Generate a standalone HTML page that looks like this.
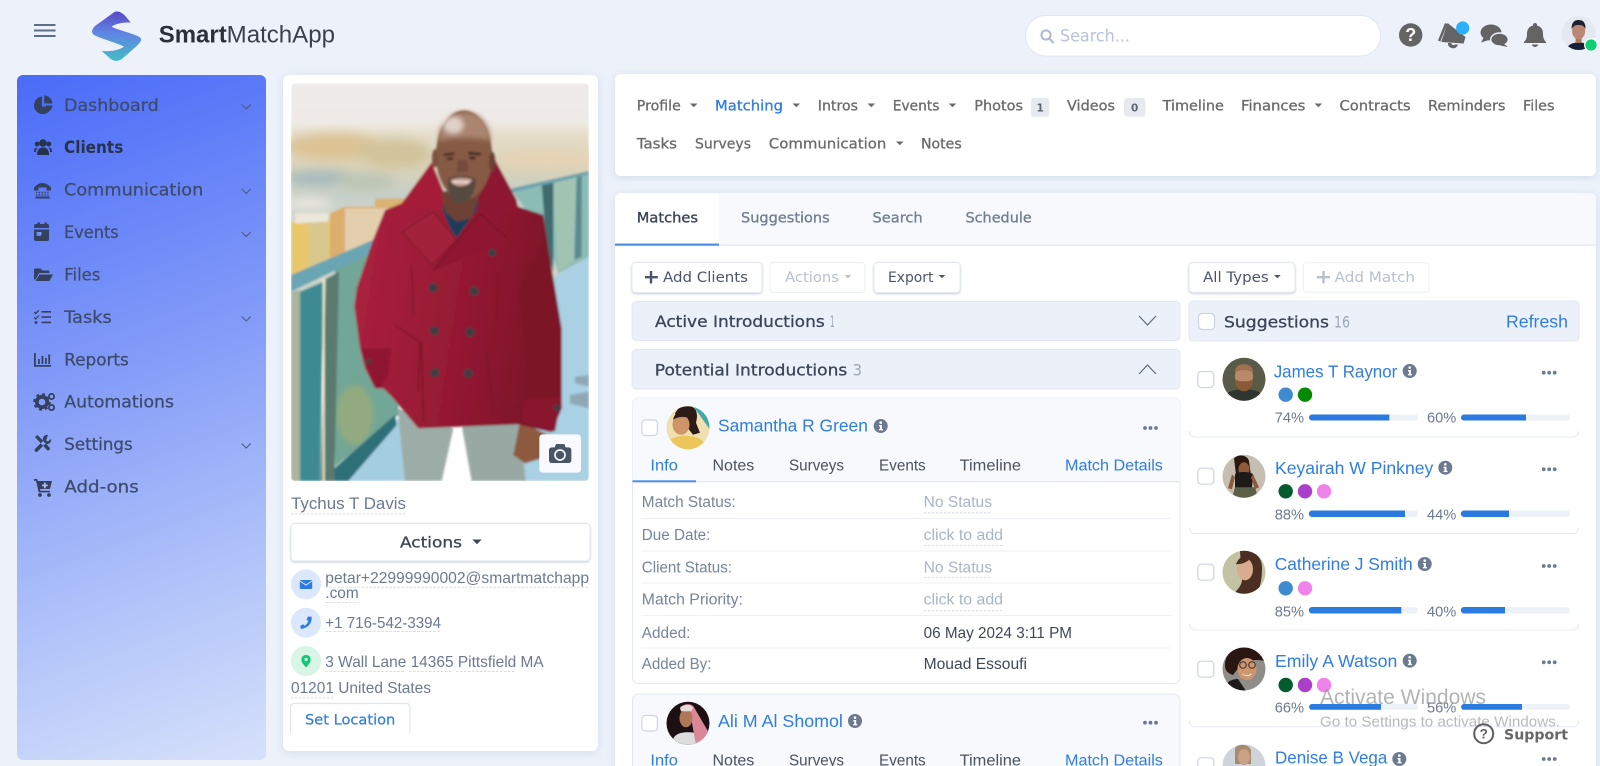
<!DOCTYPE html>
<html lang="en"><head><meta charset="utf-8"><title>SmartMatchApp</title>
<style>
html,body{margin:0;padding:0;background:#edf2fa;width:1600px;height:766px;overflow:hidden}
svg{display:block;filter:blur(.35px)}
text{white-space:pre}
.p{font-family:"DejaVu Sans",sans-serif}
.l{font-family:"Liberation Sans",sans-serif}
.nav{font-size:14px;fill:#6b6b6b;stroke:#6b6b6b;stroke-width:.3;font-family:"DejaVu Sans",sans-serif}
.side{font-size:16.5px;fill:#3c4a6c;stroke:#3c4a6c;stroke-width:.25;font-family:"DejaVu Sans",sans-serif}
.btn{font-size:14px;fill:#4a5568;stroke:currentColor;stroke-width:0;font-family:"DejaVu Sans",sans-serif}
.hd{font-size:16px;fill:#3a4558;font-family:"DejaVu Sans",sans-serif}
.nm{font-size:17.5px;fill:#2f7de1;font-family:"Liberation Sans",sans-serif}
.tb{font-size:15.5px;fill:#4a5361;font-family:"Liberation Sans",sans-serif}
.lb{font-size:15.5px;fill:#76859a;font-family:"Liberation Sans",sans-serif}
.vl{font-size:15.5px;fill:#a9b5c8;font-family:"Liberation Sans",sans-serif}
.dk{font-size:15.5px;fill:#3e4857;font-family:"Liberation Sans",sans-serif}
.ct{font-size:16px;fill:#6b7a90;font-family:"Liberation Sans",sans-serif}
.pc{font-size:15px;fill:#6b7a90;font-family:"Liberation Sans",sans-serif}
.dash{stroke:#d5dce9;stroke-width:1;stroke-dasharray:2.5 1.5}
.sep{stroke:#edf1f7;stroke-width:1}
</style></head><body>
<svg width="1600" height="766" viewBox="0 0 1600 766" xmlns="http://www.w3.org/2000/svg">
<defs>
<linearGradient id="sg" gradientUnits="userSpaceOnUse" x1="17" y1="75" x2="266" y2="760"><stop offset="0" stop-color="#4a6bf8"/><stop offset=".4" stop-color="#8099f8"/><stop offset=".75" stop-color="#b3c5f9"/><stop offset="1" stop-color="#d6e1fa"/></linearGradient>
<linearGradient id="lg" x1=".55" y1="0" x2=".5" y2="1"><stop offset="0" stop-color="#5a48c4"/><stop offset=".45" stop-color="#5f86e4"/><stop offset="1" stop-color="#45bcc6"/></linearGradient>
<linearGradient id="city" x1="0" y1="0" x2="0" y2="1"><stop offset="0" stop-color="#eeebea"/><stop offset=".14" stop-color="#efeae6"/><stop offset=".2" stop-color="#e4dcc8"/><stop offset=".32" stop-color="#d9d2b8"/><stop offset=".42" stop-color="#c6cfc8"/><stop offset=".52" stop-color="#d2d7cf"/><stop offset="1" stop-color="#c5d0c0"/></linearGradient>
<linearGradient id="coat" x1="0" y1="0" x2="1" y2=".2"><stop offset="0" stop-color="#ad2240"/><stop offset=".55" stop-color="#971a34"/><stop offset="1" stop-color="#7c1229"/></linearGradient>
<filter id="sh" x="-5%" y="-5%" width="110%" height="110%"><feDropShadow dx="0" dy="2" stdDeviation="5" flood-color="#9fb0cc" flood-opacity=".35"/></filter>
<filter id="bs" x="-20%" y="-20%" width="140%" height="160%"><feDropShadow dx="0" dy="1" stdDeviation="1" flood-color="#5a6a85" flood-opacity=".35"/></filter>
<filter id="bl"><feGaussianBlur stdDeviation="3"/></filter>
<filter id="bl2"><feGaussianBlur stdDeviation="14"/></filter>
<filter id="bl4"><feGaussianBlur stdDeviation="7"/></filter>
<clipPath id="ph"><rect x="18" y="25" width="894" height="1193" rx="12"/></clipPath>
<clipPath id="av"><circle r="21.5"/></clipPath>
<clipPath id="hav"><circle r="17"/></clipPath>
<symbol id="inf" viewBox="-7 -7 14 14" overflow="visible"><circle r="7" fill="#6b7a90"/><circle cy="-3.4" r="1.3" fill="#fff"/><path d="M-1.7-1h2.9v4h1v1.4h-4V3h1V.4h-.9z" fill="#fff"/></symbol>
<symbol id="dots" viewBox="0 0 15 4" overflow="visible"><circle cx="2" cy="2" r="1.9" fill="#6b7a90"/><circle cx="7.5" cy="2" r="1.9" fill="#6b7a90"/><circle cx="13" cy="2" r="1.9" fill="#6b7a90"/></symbol>
<symbol id="cb" viewBox="0 0 17 17" overflow="visible"><rect x=".5" y=".5" width="16" height="16" rx="3.5" fill="#fff" stroke="#ccd5e4" stroke-width="1.2"/></symbol>
</defs>

<rect width="1600" height="766" fill="#edf2fa"/>

<!-- header -->
<g fill="#5d6e87"><rect x="34" y="24" width="21.5" height="2"/><rect x="34" y="29.5" width="21.5" height="2"/><rect x="34" y="35" width="21.5" height="2"/></g>
<path transform="scale(.3333)" fill="url(#lg)" d="M345 35C360 32 372 40 392 68C370 66 345 72 335 80C345 88 400 100 420 112C428 120 420 128 410 138L368 175C355 186 340 184 330 175L305 153C330 155 355 152 372 140C350 128 300 115 282 105C272 98 276 88 285 78Z"/>
<text x="158.7" y="42.5" font-family="Liberation Sans" font-weight="700" font-size="24" fill="#2b2f3a" textLength="68" lengthAdjust="spacingAndGlyphs">Smart</text>
<text x="226.7" y="42.5" font-family="Liberation Sans" font-size="24" fill="#3b404c" textLength="108.3" lengthAdjust="spacingAndGlyphs">MatchApp</text>

<rect x="1025.6" y="15.5" width="355" height="40.5" rx="20" fill="#fff" stroke="#dfe7f3"/>
<circle cx="1046" cy="35" r="4.6" fill="none" stroke="#aebbd0" stroke-width="2"/><path d="M1049.5 38.5l4 4.5" stroke="#aebbd0" stroke-width="2.2"/>
<text x="1060" y="41.5" class="p" font-size="16.5" fill="#b7c3d7" textLength="70" lengthAdjust="spacingAndGlyphs">Search...</text>

<circle cx="1410.7" cy="35" r="11.7" fill="#646464"/>
<text x="1410.7" y="41.2" text-anchor="middle" font-family="Liberation Sans" font-weight="700" font-size="18" fill="#fff">?</text>
<g fill="#646464"><path d="M1438 40.500l7-17.500 2.300 1-7 17.500z"/><path d="M1447.500 23l18 14-1.800 6.500-22.500-1.500z"/><path d="M1448 43a5 4.500 0 0 0 10 1.500h-3a2.300 2.300 0 0 1-3.800-1.500z"/></g>
<circle cx="1462.7" cy="28" r="6.6" fill="#2bb0ff"/>
<g fill="#646464"><ellipse cx="1491" cy="32.500" rx="10.500" ry="8"/><path d="M1484 37l-3 5.500 8-2.500z"/><ellipse cx="1499.500" cy="39.500" rx="8.800" ry="6.500" stroke="#edf2fa" stroke-width="1.400"/><path d="M1504 44l4 3-8-1.500z"/></g>
<path fill="#646464" d="M1535 23a2 2 0 0 1 2 2.5c4 1 6 4 6 8 0 4.500 1 6.500 3 8.500v1h-22v-1c2-2 3-4 3-8.500 0-4 2-7 6-8a2 2 0 0 1 2-2.500z"/><path fill="#646464" d="M1532 44.500h6a3 2.500 0 0 1-6 0z"/>
<g transform="translate(1578.6,33)" clip-path="url(#hav)"><rect x="-17" y="-17" width="34" height="34" fill="#e4e8ef"/><path d="M-12 17c1-6 6-7 12-8 6 1 11 2 12 8z" fill="#15203c"/><rect x="-3" y="3" width="6" height="7" fill="#a87560"/><ellipse cy="-2" rx="6.5" ry="8.500" fill="#b98773"/><path d="M-7-4c0-7 3-9 7-9s7 2 7 9c-2-3-3-4-7-4s-5 1-7 4z" fill="#1f2230"/></g>
<circle cx="1591" cy="45" r="6.300" fill="#0fd070" stroke="#fff" stroke-width="1.300"/>

<!-- sidebar -->
<rect x="17" y="75" width="249" height="685" rx="6" fill="url(#sg)"/>
<g fill="#33415f">
<path d="M42 96.500A8.800 8.800 0 1 0 51.500 106.500L42 106.500Z"/><path d="M44.200 95.500A8.200 8.200 0 0 1 52.300 103.500H44.200Z"/><path d="M45 105.500h7.300a8 8 0 0 1-2 5z"/>
<circle cx="43" cy="143" r="3.700" fill="#27324b"/><circle cx="37.200" cy="144" r="2.400" fill="#27324b"/><circle cx="48.800" cy="144" r="2.400" fill="#27324b"/><path d="M37 155c0-5 2-7.500 6-7.500s6 2.500 6 7.500z" fill="#27324b"/><path d="M34 152c0-3 1-4.500 3.800-4.500-1.500 1-2 3-2 4.500zM52 152c0-3-1-4.500-3.800-4.500 1.500 1 2 3 2 4.500z" fill="#27324b"/>
<path d="M34 187.500q8.500-9 17 0v3h-4.500v-3h-8v3H34z"/>
<g stroke="#33415f" stroke-width="1.500" stroke-dasharray="1.400 1.400"><path d="M36 192.500h13M36 195h13"/></g><rect x="35.500" y="196.500" width="14" height="2"/>
<path d="M34 226a2 2 0 0 1 2-2h1.500v-1.500h2.500V224h4.500v-1.500H47V224h.5a2 2 0 0 1 1.500 2v2H34z"/><path d="M34 229.500h15V239a2 2 0 0 1-2 2H36a2 2 0 0 1-2-2zM36.500 232v4h4.500v-4z" fill-rule="evenodd"/>
<path d="M34 270a1.500 1.500 0 0 1 1.500-1.500h5l2 2H48a1.500 1.500 0 0 1 1.500 1.500v1H39l-3.500 6.500H34z"/><path d="M39.500 274.500H53l-3.500 6.500H35.500z"/>
<path d="M41.500 311h9.500v1.600h-9.500zM41.500 316.300h9.500v1.600h-9.500zM41.500 321.600h9.500v1.600h-9.500z"/><path d="M34.500 311.500l1.300 1.300 2.500-3 .9.800-3.400 4-2-2zM34.500 316.800l1.300 1.300 2.500-3 .9.800-3.400 4-2-2z"/><circle cx="36" cy="322.500" r="1.500"/>
<path d="M34 353h1.800v12h15.300v1.800H34z"/><rect x="38" y="359" width="1.800" height="5"/><rect x="41.500" y="356" width="1.800" height="8"/><rect x="45" y="358" width="1.800" height="6"/><rect x="48.300" y="354.500" width="1.800" height="9.500"/>
<circle cx="42" cy="402" r="5.200" fill="none" stroke="#33415f" stroke-width="3.800"/><circle cx="42" cy="402" r="7.800" fill="none" stroke="#33415f" stroke-width="2" stroke-dasharray="3 3.100"/><circle cx="51.500" cy="396.500" r="2.600" fill="none" stroke="#33415f" stroke-width="1.800"/><circle cx="51.500" cy="407.500" r="2.600" fill="none" stroke="#33415f" stroke-width="1.800"/>
<path d="M35 437l2.500-2 12 12.500c1.500 1.500-1 4-2.500 2.500zM48 435a4.500 4.500 0 0 0-5 6L35 449c-1.500 1.500 1 4 2.500 2.500L45 444a4.500 4.500 0 0 0 6-5l-3 2.500-2-1z"/>
<path d="M34 479h3.200l.6 2H52l-2 8H40l.4 1.800h9.500v1.600H38.700L36 480.800H34z"/><circle cx="40" cy="495" r="1.900"/><circle cx="49" cy="495" r="1.900"/><path d="M44 482.500h1.700v2h2v1.700h-2v2H44v-2h-2v-1.700h2z" fill="#a9bbf8"/>
</g>
<rect x="38.500" y="232" width="3" height="3" fill="#7a96f8"/>
<text class="side" x="64" y="110.800" textLength="94.700" lengthAdjust="spacingAndGlyphs">Dashboard</text>
<text class="side" x="64" y="153" font-weight="700" style="fill:#27324b;stroke:none" textLength="59.300" lengthAdjust="spacingAndGlyphs">Clients</text>
<text class="side" x="64" y="195.500" textLength="139.300" lengthAdjust="spacingAndGlyphs">Communication</text>
<text class="side" x="64" y="238" textLength="54.700" lengthAdjust="spacingAndGlyphs">Events</text>
<text class="side" x="64.300" y="280.700" textLength="36" lengthAdjust="spacingAndGlyphs">Files</text>
<text class="side" x="64.300" y="323" textLength="47.400" lengthAdjust="spacingAndGlyphs">Tasks</text>
<text class="side" x="64.300" y="365.300" textLength="64.400" lengthAdjust="spacingAndGlyphs">Reports</text>
<text class="side" x="64.300" y="407.700" textLength="109.700" lengthAdjust="spacingAndGlyphs">Automations</text>
<text class="side" x="64.300" y="450" textLength="68.400" lengthAdjust="spacingAndGlyphs">Settings</text>
<text class="side" x="64.300" y="492.700" textLength="74.400" lengthAdjust="spacingAndGlyphs">Add-ons</text>
<g fill="none" stroke="#4a5a80" stroke-width="1.100"><path d="M241.700 104.500l4.500 4.500 4.500-4.500M241.700 189l4.500 4.500 4.500-4.500M241.700 232l4.500 4.500 4.500-4.500M241.700 316.500l4.500 4.500 4.500-4.500M241.700 443.500l4.500 4.500 4.500-4.500"/></g>

<!-- profile card -->
<rect x="283" y="75" width="315" height="676" rx="6" fill="#fff" filter="url(#sh)"/>
<g transform="translate(285,75) scale(.33333)"><g clip-path="url(#ph)"><g filter="url(#bl)">
<rect x="18" y="25" width="894" height="800" fill="url(#city)"/>
<g filter="url(#bl2)"><ellipse cx="150" cy="215" rx="150" ry="40" fill="#dcc394"/><ellipse cx="330" cy="235" rx="110" ry="45" fill="#d2c49c"/><ellipse cx="790" cy="250" rx="150" ry="25" fill="#e7d3b5"/><ellipse cx="110" cy="310" rx="110" ry="25" fill="#a9bcbe"/><ellipse cx="240" cy="320" rx="90" ry="25" fill="#bcc5b5"/><ellipse cx="70" cy="385" rx="70" ry="22" fill="#e6e4dc"/></g>
<path d="M18 440L135 432V590L18 610z" fill="#e8c66a"/><path d="M70 440h60v150h-60z" fill="#d9c88e"/><path d="M30 415L130 415L130 440L30 445z" fill="#ebe7da"/><path d="M135 415L180 395H300V490L135 555z" fill="#dcae6e"/><path d="M180 400H300V490L180 530z" fill="#e3cfad"/><path d="M270 370H360V400H270z" fill="#d9b474"/>
<path d="M680 345L912 290V545L820 595L790 500z" fill="#8cbcb6"/><path d="M800 320L880 302V550L820 590z" fill="#a0c3b2"/><path d="M770 325L805 318V590L785 520z" fill="#3f6a70"/><path d="M875 300L890 296V545L868 555z" fill="#5a8a8f"/><path d="M680 340L912 288V298L680 352z" fill="#6ba2ac"/>
<path d="M800 610L912 545V1218H700z" fill="#a9d0e3"/><path d="M150 1218L340 1030L400 1218z" fill="#a5cde0"/>
<path d="M150 570L360 500L340 1020L150 1175z" fill="#72a696"/><ellipse cx="210" cy="1020" rx="55" ry="90" fill="#93aa80" filter="url(#bl4)"/><path d="M18 600L280 488L290 520L18 650z" fill="#6ba5b3"/>
<path d="M45 650L115 620L105 1218H45z" fill="#3d8a93"/><path d="M122 612L162 590L148 1218H106z" fill="#5a7a6e"/><rect x="113" y="610" width="6" height="608" fill="#eee9cf"/><path d="M18 650L45 645V1218H18z" fill="#a9b5a0"/><path d="M148 1180L330 1020L335 1050L190 1218H148z" fill="#2f6f78"/>
<path d="M870 905L912 900V935L870 925zM855 960L912 950V1000L855 985z" fill="#8fa8b6"/>
<path d="M338 1000L505 1060L470 1218H360z" fill="#9caca6"/><path d="M530 1050L702 1030L722 1218H560z" fill="#98a9a3"/>
<path d="M685 1140L705 1040L790 1080L770 1150L720 1165z" fill="#8d5a40"/>
<path d="M440 262L350 385L300 405L262 500L215 640L208 695L225 820L240 880L270 940L295 940L320 965L400 1060L700 1048L800 1072L830 1000L830 760L790 520L775 420L700 395L632 258L590 340L470 350z" fill="url(#coat)"/>
<path d="M700 640L780 480L825 780L830 1000L800 1070L715 1040L722 860z" fill="#7c1228"/>
<path d="M455 365L595 380L510 495z" fill="#1d3d5a"/>
<path d="M440 262L350 385L345 410L415 395L470 410L480 360z" fill="#a51e39"/><path d="M632 258L590 340L575 405L700 415L695 375z" fill="#8d1730"/><path d="M340 465L445 400L520 495L440 575z" fill="#a3203a"/><path d="M440 590L585 405L668 490L600 525z" fill="#8e1730"/><path d="M350 470L445 410L515 495L440 570z" fill="none" stroke="#85142c" stroke-width="4"/><path d="M445 585L585 415L665 490" fill="none" stroke="#78102a" stroke-width="4"/>
<path d="M410 800L415 1040M605 830L625 1020L715 990M330 750L405 800L400 950M380 570L385 720M640 590L635 740" fill="none" stroke="#7a1328" stroke-width="4"/>
<path d="M230 820L320 820L310 900L285 940L265 930z" fill="#8f1830"/><path d="M720 975L830 965L810 1070L710 1040z" fill="#8a152d"/>
<path d="M470 350L590 340L560 430L515 440L480 410z" fill="#6d4334"/>
<ellipse cx="537" cy="240" rx="85" ry="135" fill="#875a44"/><ellipse cx="450" cy="250" rx="10" ry="28" fill="#7d5240"/><ellipse cx="622" cy="260" rx="10" ry="30" fill="#6b4130"/>
<g filter="url(#bl4)"><path d="M462 200C460 140 490 112 540 112C590 112 618 150 616 200C590 185 490 185 462 200z" fill="#ab8570"/><ellipse cx="505" cy="150" rx="30" ry="25" fill="#e0d2c8"/></g>
<path d="M474 236L510 232L506 240L478 243zM548 230L590 234L586 241L552 239z" fill="#3d2a20"/><ellipse cx="495" cy="251" rx="11" ry="4" fill="#33231c"/><ellipse cx="562" cy="249" rx="11" ry="4" fill="#33231c"/>
<path d="M520 255L545 255L550 290L515 292z" fill="#74493a"/>
<path d="M488 315C500 298 550 298 572 312C572 350 555 388 522 386C500 384 488 350 488 315z" fill="#574840"/><path d="M496 316C512 306 545 306 562 314C552 340 505 340 496 316z" fill="#c79e90"/><path d="M503 318H552V324H503z" fill="#e8ddd8"/>
<g fill="#3c3e42"><circle cx="445" cy="638" r="14"/><circle cx="567" cy="648" r="14"/><circle cx="448" cy="767" r="14"/><circle cx="555" cy="772" r="14"/><circle cx="449" cy="893" r="14"/><circle cx="550" cy="895" r="14"/><circle cx="622" cy="533" r="12"/><circle cx="250" cy="860" r="8"/><circle cx="815" cy="998" r="10"/></g>
</g></g>
<rect x="763" y="1078" width="125" height="115" rx="10" fill="#f8faff"/>
<path d="M792 1125a8 8 0 0 1 8-8h9l4-10h25l4 10h9a8 8 0 0 1 8 8v31a8 8 0 0 1-8 8h-51a8 8 0 0 1-8-8z" fill="#4a5568"/><circle cx="825" cy="1140" r="15" fill="none" stroke="#f8faff" stroke-width="5"/>
</g>
<text x="291" y="508.800" class="ct" style="font-size:17px" textLength="115" lengthAdjust="spacingAndGlyphs">Tychus T Davis</text>
<path class="dash" d="M291 514h115"/>
<rect x="291" y="523.500" width="299" height="37.500" rx="4" fill="#fff" stroke="#e3e8f0" filter="url(#bs)"/>
<text x="400" y="547.500" class="p" font-size="15.500" fill="#3d4757" stroke="#3d4757" stroke-width=".3" textLength="62" lengthAdjust="spacingAndGlyphs">Actions</text>
<path d="M472.300 539.500h9.400l-4.700 4.700z" fill="#3d4757"/>
<circle cx="306" cy="584.300" r="15" fill="#dbe7fb"/><rect x="299.800" y="580" width="12.400" height="9" rx="1.300" fill="#2f7de1"/><path d="M300 581l6 4 6-4" fill="none" stroke="#dbe7fb" stroke-width="1"/>
<text x="325.300" y="582.800" class="ct" textLength="263.700" lengthAdjust="spacingAndGlyphs">petar+22999990002@smartmatchapp</text>
<path class="dash" d="M325.300 587.300H589"/>
<text x="325.300" y="598.200" class="ct" textLength="33.400" lengthAdjust="spacingAndGlyphs">.com</text>
<path class="dash" d="M325.300 602.500h33.400"/>
<circle cx="306" cy="622.700" r="15" fill="#dbe7fb"/><path d="M311.500 616.500c1 6-3 11.500-10.500 12.500l-.8-3 3-1.800 1.500 1.500c1.800-1.100 3-2.800 3.600-4.800l-1.800-1 1.300-3.100z" fill="#2f7de1"/>
<text x="325.300" y="627.800" class="ct" textLength="115.700" lengthAdjust="spacingAndGlyphs">+1 716-542-3394</text>
<path class="dash" d="M325.300 631.500H441"/>
<circle cx="306" cy="661" r="15" fill="#d8f5e6"/><path d="M306 667.500c-3-3.500-4.700-5.500-4.700-8a4.700 4.700 0 0 1 9.400 0c0 2.500-1.700 4.500-4.700 8z" fill="#10c978"/><circle cx="306" cy="659.500" r="1.600" fill="#d8f5e6"/>
<text x="325.300" y="666.800" class="ct" textLength="218.400" lengthAdjust="spacingAndGlyphs">3 Wall Lane 14365 Pittsfield MA</text>
<path class="dash" d="M325.300 671.500H405M409 671.500h43M456 671.500h60"/>
<text x="291" y="692.800" class="ct" textLength="140" lengthAdjust="spacingAndGlyphs">01201 United States</text>
<path class="dash" d="M291 698h43"/>
<path d="M290.500 733v-26a3.500 3.500 0 0 1 3.500-3.500h112.500a3.500 3.500 0 0 1 3.500 3.500v26" fill="#fff" stroke="#dfe5ef" stroke-width="1.200"/>
<text x="305" y="724.300" class="p" font-size="14" fill="#2f7de1" stroke="#2f7de1" stroke-width=".2" textLength="90.300" lengthAdjust="spacingAndGlyphs">Set Location</text>

<!-- top nav -->
<rect x="615" y="74" width="981" height="102" rx="6" fill="#fff" filter="url(#sh)"/>
<text class="nav" x="636.800" y="110.700" textLength="44" lengthAdjust="spacingAndGlyphs">Profile</text>
<text class="nav" x="715" y="110.700" style="fill:#2f7de1;stroke:#2f7de1" textLength="68" lengthAdjust="spacingAndGlyphs">Matching</text>
<text class="nav" x="817.800" y="110.700" textLength="40.200" lengthAdjust="spacingAndGlyphs">Intros</text>
<text class="nav" x="892.800" y="110.700" textLength="46.700" lengthAdjust="spacingAndGlyphs">Events</text>
<text class="nav" x="974.300" y="110.700" textLength="48.700" lengthAdjust="spacingAndGlyphs">Photos</text>
<rect x="1031" y="98" width="18.300" height="18.700" rx="3" fill="#e6e9ee"/><text x="1040.200" y="111.500" text-anchor="middle" class="p" font-size="10.500" font-weight="700" fill="#5f6670">1</text>
<text class="nav" x="1067" y="110.700" textLength="48" lengthAdjust="spacingAndGlyphs">Videos</text>
<rect x="1124" y="98" width="21.400" height="18.700" rx="3" fill="#e6e9ee"/><text x="1134.700" y="111.500" text-anchor="middle" class="p" font-size="10.500" font-weight="700" fill="#5f6670">0</text>
<text class="nav" x="1162.600" y="110.700" textLength="61.300" lengthAdjust="spacingAndGlyphs">Timeline</text>
<text class="nav" x="1241" y="110.700" textLength="64.400" lengthAdjust="spacingAndGlyphs">Finances</text>
<text class="nav" x="1339.500" y="110.700" textLength="71.100" lengthAdjust="spacingAndGlyphs">Contracts</text>
<text class="nav" x="1428" y="110.700" textLength="77.500" lengthAdjust="spacingAndGlyphs">Reminders</text>
<text class="nav" x="1523" y="110.700" textLength="31.500" lengthAdjust="spacingAndGlyphs">Files</text>
<text class="nav" x="636.800" y="148.700" textLength="40.200" lengthAdjust="spacingAndGlyphs">Tasks</text>
<text class="nav" x="695" y="148.700" textLength="56" lengthAdjust="spacingAndGlyphs">Surveys</text>
<text class="nav" x="768.800" y="148.700" textLength="117.500" lengthAdjust="spacingAndGlyphs">Communication</text>
<text class="nav" x="921" y="148.700" textLength="40.700" lengthAdjust="spacingAndGlyphs">Notes</text>
<g fill="#6b6b6b"><path d="M690 103.500h7.600l-3.800 3.800zM867.500 103.500h7.600l-3.800 3.800zM948.700 103.500h7.600l-3.800 3.800zM1314.600 103.500h7.600l-3.800 3.800zM896 141.500h7.600l-3.800 3.800z"/><path d="M792.500 103.500h7.600l-3.800 3.800z"/></g>

<!-- main card -->
<rect x="615" y="193" width="981" height="600" rx="6" fill="#fff" filter="url(#sh)"/>
<path d="M615 245v-46a6 6 0 0 1 6-6h969a6 6 0 0 1 6 6v46z" fill="#f7f9fd"/>
<path d="M615 245v-46a6 6 0 0 1 6-6h98v52z" fill="#fff"/>
<rect x="615" y="244.500" width="981" height="1.500" fill="#e5ebf5"/><rect x="615" y="243.500" width="104" height="2.200" fill="#4d8fe6"/>
<text x="636.800" y="222.500" class="p" font-size="14" fill="#3a4558" stroke="#3a4558" stroke-width=".35" textLength="61.200" lengthAdjust="spacingAndGlyphs">Matches</text>
<text x="741" y="222.500" class="p" font-size="14" fill="#6f7e93" stroke="#6f7e93" stroke-width=".3" textLength="88.700" lengthAdjust="spacingAndGlyphs">Suggestions</text>
<text x="872.500" y="222.500" class="p" font-size="14" fill="#6f7e93" stroke="#6f7e93" stroke-width=".3" textLength="50.200" lengthAdjust="spacingAndGlyphs">Search</text>
<text x="965.500" y="222.500" class="p" font-size="14" fill="#6f7e93" stroke="#6f7e93" stroke-width=".3" textLength="66.200" lengthAdjust="spacingAndGlyphs">Schedule</text>

<!-- buttons -->
<rect x="632" y="262.500" width="130" height="30" rx="3.500" fill="#fff" stroke="#e3e8f0" filter="url(#bs)"/>
<path d="M651 271v12.500M645 277.200h12.800" stroke="#4a5568" stroke-width="2.400"/>
<text x="663" y="282" class="btn" textLength="85" lengthAdjust="spacingAndGlyphs">Add Clients</text>
<rect x="770" y="262.500" width="95" height="30" rx="3.500" fill="#fff" stroke="#ebeff5"/>
<text x="785" y="282" class="btn" style="fill:#b7c0ce" textLength="54" lengthAdjust="spacingAndGlyphs">Actions</text><path d="M844.600 275h6.600l-3.300 3.300z" fill="#b7c0ce"/>
<rect x="874" y="262.500" width="86" height="30" rx="3.500" fill="#fff" stroke="#e3e8f0" filter="url(#bs)"/>
<text x="888" y="282" class="btn" textLength="45.400" lengthAdjust="spacingAndGlyphs">Export</text><path d="M938.700 275h6.600l-3.300 3.300z" fill="#4a5568"/>
<rect x="1189" y="262.700" width="106" height="29.500" rx="3.500" fill="#fff" stroke="#e3e8f0" filter="url(#bs)"/>
<text x="1203" y="282" class="btn" textLength="65.700" lengthAdjust="spacingAndGlyphs">All Types</text><path d="M1274 275h6.700l-3.350 3.300z" fill="#4a5568"/>
<rect x="1303.300" y="262.700" width="125.700" height="29.500" rx="3.500" fill="#fff" stroke="#ebeff5"/>
<path d="M1323.500 271v12.500M1317 277.200h13" stroke="#b7c0ce" stroke-width="2.400"/>
<text x="1334.700" y="282" class="btn" style="fill:#b7c0ce" textLength="80.300" lengthAdjust="spacingAndGlyphs">Add Match</text>

<!-- accordions -->
<rect x="632" y="301.500" width="548" height="39" rx="4" fill="#ecf1f9" stroke="#e2e8f3"/>
<text x="655" y="327" class="hd" stroke="#3a4558" stroke-width=".3" textLength="169.700" lengthAdjust="spacingAndGlyphs">Active Introductions</text>
<text x="830" y="327" class="hd" style="fill:#9aa5b6" textLength="4.600" lengthAdjust="spacingAndGlyphs">1</text>
<path d="M1139 316l8.500 9 8.500-9" fill="none" stroke="#5d6b80" stroke-width="1.200"/>
<rect x="632" y="349.500" width="548" height="39.500" rx="4" fill="#ecf1f9" stroke="#e2e8f3"/>
<text x="654.800" y="375.300" class="hd" stroke="#3a4558" stroke-width=".3" textLength="192.500" lengthAdjust="spacingAndGlyphs">Potential Introductions</text>
<text x="852.600" y="375.300" class="hd" style="fill:#9aa5b6" textLength="9.400" lengthAdjust="spacingAndGlyphs">3</text>
<path d="M1139 374l8.500-9 8.500 9" fill="none" stroke="#5d6b80" stroke-width="1.200"/>

<!-- match card 1 -->
<rect x="632.500" y="398" width="547.500" height="285.500" rx="6" fill="#fff" stroke="#e2e8f3"/>
<path d="M632.500 481v-77a6 6 0 0 1 6-6H1174a6 6 0 0 1 6 6v77z" fill="#f7f9fd"/>
<rect x="632.500" y="481" width="547.500" height="1.300" fill="#e4eaf5"/><rect x="632.500" y="480.300" width="63.500" height="2" fill="#4d8fe6"/>
<use href="#cb" x="641.400" y="419.500" width="16.500" height="16.500"/>
<g transform="translate(688,427.700)" clip-path="url(#av)"><rect x="-22" y="-22" width="44" height="44" fill="#f0dfaf"/><path d="M5-22H22V2z" fill="#3fa9ab"/><path d="M-22 22c0-10 8-14 20-14s18 4 22 14z" fill="#ecc659"/><path d="M-13-14c3-7 10-10 17-7 5 2 6 8 4 16l4 10L5 7-2-2z" fill="#2b1d16"/><ellipse cx="-7" cy="-3" rx="8.500" ry="10" fill="#cf9468"/><path d="M-15-8c2-8 8-11 14-9l3 8c-6-3-12-2-17 1z" fill="#2b1d16"/></g>
<text class="nm" x="718" y="431.700" textLength="149.900" lengthAdjust="spacingAndGlyphs">Samantha R Green</text>
<use href="#inf" x="873.700" y="419" width="14" height="14"/>
<use href="#dots" x="1143" y="426" width="15" height="4"/>
<text class="tb" x="650.400" y="470.500" style="fill:#2f7de1" textLength="27.500" lengthAdjust="spacingAndGlyphs">Info</text>
<text class="tb" x="712.500" y="470.500" textLength="41.800" lengthAdjust="spacingAndGlyphs">Notes</text>
<text class="tb" x="789" y="470.500" textLength="55" lengthAdjust="spacingAndGlyphs">Surveys</text>
<text class="tb" x="879" y="470.500" textLength="46.700" lengthAdjust="spacingAndGlyphs">Events</text>
<text class="tb" x="959.600" y="470.500" textLength="61.400" lengthAdjust="spacingAndGlyphs">Timeline</text>
<text class="tb" x="1065" y="470.500" style="fill:#2f7de1" textLength="97.900" lengthAdjust="spacingAndGlyphs">Match Details</text>
<path class="sep" d="M641 518.500h530M641 551h530M641 583h530M641 615.500h530M641 648h530"/>
<text class="lb" x="641.800" y="507.200" textLength="93.900" lengthAdjust="spacingAndGlyphs">Match Status:</text>
<text class="lb" x="641.800" y="539.800" textLength="68.600" lengthAdjust="spacingAndGlyphs">Due Date:</text>
<text class="lb" x="641.800" y="572.500" textLength="90.200" lengthAdjust="spacingAndGlyphs">Client Status:</text>
<text class="lb" x="641.800" y="604.500" textLength="101.100" lengthAdjust="spacingAndGlyphs">Match Priority:</text>
<text class="lb" x="641.800" y="637.800" textLength="48.600" lengthAdjust="spacingAndGlyphs">Added:</text>
<text class="lb" x="641.800" y="669.200" textLength="69.600" lengthAdjust="spacingAndGlyphs">Added By:</text>
<text class="vl" x="923.600" y="507.200" textLength="68.400" lengthAdjust="spacingAndGlyphs">No Status</text>
<text class="vl" x="923.600" y="539.800" textLength="79.400" lengthAdjust="spacingAndGlyphs">click to add</text>
<text class="vl" x="923.600" y="572.500" textLength="68.400" lengthAdjust="spacingAndGlyphs">No Status</text>
<text class="vl" x="923.600" y="604.500" textLength="79.400" lengthAdjust="spacingAndGlyphs">click to add</text>
<text class="dk" x="923.600" y="637.800" textLength="148.400" lengthAdjust="spacingAndGlyphs">06 May 2024 3:11 PM</text>
<text class="dk" x="923.600" y="669.200" textLength="103.400" lengthAdjust="spacingAndGlyphs">Mouad Essoufi</text>
<path class="dash" d="M923.600 512.800H992M923.600 545.500H1003M923.600 577.500H992M923.600 610.800H1003"/>

<!-- match card 2 -->
<path d="M632.500 780V700a6 6 0 0 1 6-6H1174a6 6 0 0 1 6 6v80z" fill="#f7f9fd" stroke="#e2e8f3"/>
<use href="#cb" x="641.400" y="715" width="16.500" height="16.500"/>
<g transform="translate(688,723.300)" clip-path="url(#av)"><rect x="-22" y="-22" width="44" height="44" fill="#1d1015"/><path d="M-16 22c0-10 6-13 16-13s16 3 16 13z" fill="#dcdcdc"/><path d="M-8-16c6-5 13-3 14 0l14 24-2 14H8L3-6z" fill="#d98899"/><ellipse cx="-2" cy="-5" rx="6.500" ry="9" fill="#ad7856"/><path d="M-8-15c4-5 12-4 13 0l-2 3H-7z" fill="#e8d8d8"/></g>
<text class="nm" x="718" y="727" textLength="124.900" lengthAdjust="spacingAndGlyphs">Ali M Al Shomol</text>
<use href="#inf" x="848" y="714" width="14" height="14"/>
<use href="#dots" x="1143" y="720.700" width="15" height="4"/>
<text class="tb" x="650.400" y="765.500" style="fill:#2f7de1" textLength="27.500" lengthAdjust="spacingAndGlyphs">Info</text>
<text class="tb" x="712.500" y="765.500" textLength="41.800" lengthAdjust="spacingAndGlyphs">Notes</text>
<text class="tb" x="789" y="765.500" textLength="55" lengthAdjust="spacingAndGlyphs">Surveys</text>
<text class="tb" x="879" y="765.500" textLength="46.700" lengthAdjust="spacingAndGlyphs">Events</text>
<text class="tb" x="959.600" y="765.500" textLength="61.400" lengthAdjust="spacingAndGlyphs">Timeline</text>
<text class="tb" x="1065" y="765.500" style="fill:#2f7de1" textLength="97.900" lengthAdjust="spacingAndGlyphs">Match Details</text>

<!-- suggestions -->
<rect x="1189" y="301" width="390" height="40" rx="4" fill="#ecf1f9" stroke="#e2e8f3"/>
<use href="#cb" x="1198" y="313" width="17" height="17"/>
<text x="1224" y="327.500" class="hd" stroke="#3a4558" stroke-width=".3" textLength="105" lengthAdjust="spacingAndGlyphs">Suggestions</text>
<text x="1334" y="327.500" class="hd" style="fill:#9aa5b6" textLength="16" lengthAdjust="spacingAndGlyphs">16</text>
<text x="1506" y="327.500" class="nm" textLength="62" lengthAdjust="spacingAndGlyphs">Refresh</text>

<!-- s1 -->
<use href="#cb" x="1197.300" y="371" width="17" height="17"/>
<g transform="translate(1244,379.300)" clip-path="url(#av)"><rect x="-22" y="-22" width="44" height="44" fill="#5a5a48"/><path d="M-20 22c0-9 8-12 20-12s20 3 20 12z" fill="#2f352f"/><ellipse cy="-3" rx="9" ry="11" fill="#b98a6a"/><path d="M-9-1c1 3 5 3 9 3s8 0 9-3c0 8-4 13-9 13s-9-5-9-13z" fill="#8a5a36"/><path d="M-9-7c0-6 4-8 9-8s9 2 9 8c-5-3-13-3-18 0z" fill="#a07050"/></g>
<text class="nm" x="1273.700" y="377.500" textLength="123.600" lengthAdjust="spacingAndGlyphs">James T Raynor</text>
<use href="#inf" x="1402.700" y="364" width="14" height="14"/><use href="#dots" x="1541.700" y="370.700" width="15" height="4"/>
<circle cx="1285.700" cy="394.700" r="7.200" fill="#3f8bcf"/><circle cx="1305" cy="394.700" r="7.200" fill="#028a00"/>
<text class="pc" x="1274.700" y="422.700" textLength="29.300" lengthAdjust="spacingAndGlyphs">74%</text><text class="pc" x="1427" y="422.700" textLength="29.300" lengthAdjust="spacingAndGlyphs">60%</text>
<rect x="1309" y="414.500" width="109" height="6" rx="3" fill="#edf1f8"/><path d="M1312 414.500h77.300v6H1312a3 3 0 0 1 0-6z" fill="#2b7ae0"/>
<rect x="1461" y="414.500" width="109" height="6" rx="3" fill="#edf1f8"/><path d="M1464 414.500h62v6h-62a3 3 0 0 1 0-6z" fill="#2b7ae0"/>
<path d="M1189 431q1 6 6 6h378q5 0 6-6" fill="none" stroke="#e6ebf5"/>
<!-- s2 -->
<use href="#cb" x="1197.300" y="467.700" width="17" height="17"/>
<g transform="translate(1244,476.300)" clip-path="url(#av)"><rect x="-22" y="-22" width="44" height="44" fill="#c7beb2"/><path d="M-10-18c5-5 14-3 15 3l2 14H-8z" fill="#2a1a12"/><ellipse cx="0" cy="-7" rx="5.500" ry="7" fill="#8d5a3c"/><path d="M-9 12l0-14c2-3 15-3 18 0l-1 14z" fill="#1d1a1a"/><path d="M-12 22l3-11h20l3 11z" fill="#5b6147"/><path d="M-12-2l-4 14 4 1 3-12zM9-2l6 13-4 2-4-12z" fill="#8d5a3c"/></g>
<text class="nm" x="1275" y="474" textLength="158.300" lengthAdjust="spacingAndGlyphs">Keyairah W Pinkney</text>
<use href="#inf" x="1438.300" y="460.700" width="14" height="14"/><use href="#dots" x="1541.700" y="467.300" width="15" height="4"/>
<circle cx="1285.700" cy="491.300" r="7.200" fill="#035b2e"/><circle cx="1305" cy="491.300" r="7.200" fill="#ab3fc9"/><circle cx="1324" cy="491.300" r="7.200" fill="#f083ea"/>
<text class="pc" x="1274.700" y="519.300" textLength="29.300" lengthAdjust="spacingAndGlyphs">88%</text><text class="pc" x="1427" y="519.300" textLength="29.300" lengthAdjust="spacingAndGlyphs">44%</text>
<rect x="1309" y="510.500" width="109" height="6.500" rx="3" fill="#edf1f8"/><path d="M1312 510.500h93v6.500h-93a3 3 0 0 1 0-6.500z" fill="#2b7ae0"/>
<rect x="1461" y="510.500" width="109" height="6.500" rx="3" fill="#edf1f8"/><path d="M1464 510.500h45v6.500h-45a3 3 0 0 1 0-6.500z" fill="#2b7ae0"/>
<path d="M1189 527.500q1 6 6 6h378q5 0 6-6" fill="none" stroke="#e6ebf5"/>
<!-- s3 -->
<use href="#cb" x="1197.300" y="563.700" width="17" height="17"/>
<g transform="translate(1244,572.300)" clip-path="url(#av)"><rect x="-22" y="-22" width="44" height="44" fill="#c4c2a4"/><path d="M-4-21c10-3 22 3 22 16 0 10-1 20-6 27H-10c3-5 8-8 8-15z" fill="#4a2f22"/><ellipse cx="1" cy="-3" rx="8" ry="11" fill="#d8ab8e"/><path d="M-8-8c3-8 10-11 15-7-3 5-9 7-15 7z" fill="#4a2f22"/></g>
<text class="nm" x="1274.700" y="570" textLength="138" lengthAdjust="spacingAndGlyphs">Catherine J Smith</text>
<use href="#inf" x="1417.700" y="557" width="14" height="14"/><use href="#dots" x="1541.700" y="564" width="15" height="4"/>
<circle cx="1285.700" cy="588.300" r="7.200" fill="#3f8bcf"/><circle cx="1305" cy="588.300" r="7.200" fill="#f083ea"/>
<text class="pc" x="1274.700" y="616.300" textLength="29.300" lengthAdjust="spacingAndGlyphs">85%</text><text class="pc" x="1427" y="616.300" textLength="29.300" lengthAdjust="spacingAndGlyphs">40%</text>
<rect x="1309" y="607" width="109" height="6.500" rx="3" fill="#edf1f8"/><path d="M1312 607h89.300v6.500H1312a3 3 0 0 1 0-6.500z" fill="#2b7ae0"/>
<rect x="1461" y="607" width="109" height="6.500" rx="3" fill="#edf1f8"/><path d="M1464 607h41v6.500h-41a3 3 0 0 1 0-6.500z" fill="#2b7ae0"/>
<path d="M1189 624q1 6 6 6h378q5 0 6-6" fill="none" stroke="#e6ebf5"/>
<!-- s4 -->
<use href="#cb" x="1197.300" y="660.700" width="17" height="17"/>
<g transform="translate(1244,669)" clip-path="url(#av)"><rect x="-22" y="-22" width="44" height="44" fill="#8f8d88"/><path d="M-20 22c0-9 8-12 14-12l8 12z" fill="#1f1a1a"/><path d="M-19-4c0-12 10-18 20-18s18 6 20 14c-8-2-16-1-24 2-2 5-6 9-8 12-6-2-8-5-8-10z" fill="#2a1712"/><ellipse cx="3" cy="0" rx="9.500" ry="11" fill="#cb9670"/><circle cx="-1" cy="-4" r="3.300" fill="none" stroke="#3a2a22" stroke-width="1"/><circle cx="8" cy="-4" r="3.300" fill="none" stroke="#3a2a22" stroke-width="1"/><path d="M-2 4c3 3 7 3 10 0-1 4-8 4-10 0z" fill="#fff"/></g>
<text class="nm" x="1275" y="667" textLength="122.300" lengthAdjust="spacingAndGlyphs">Emily A Watson</text>
<use href="#inf" x="1402.700" y="653.700" width="14" height="14"/><use href="#dots" x="1541.700" y="660.300" width="15" height="4"/>
<circle cx="1285.700" cy="685" r="7.200" fill="#035b2e"/><circle cx="1305" cy="685" r="7.200" fill="#ab3fc9"/><circle cx="1324" cy="685" r="7.200" fill="#f083ea"/>
<text class="pc" x="1274.700" y="712.300" textLength="29.300" lengthAdjust="spacingAndGlyphs">66%</text><text class="pc" x="1427" y="712.300" textLength="29.300" lengthAdjust="spacingAndGlyphs">56%</text>
<rect x="1309" y="704" width="109" height="5.800" rx="2.900" fill="#edf1f8"/><path d="M1312 704h69v5.800h-69a2.900 2.900 0 0 1 0-5.800z" fill="#2b7ae0"/>
<rect x="1461" y="704" width="109" height="5.800" rx="2.900" fill="#edf1f8"/><path d="M1464 704h58v5.800h-58a2.900 2.900 0 0 1 0-5.800z" fill="#2b7ae0"/>
<path d="M1189 720.700q1 6 6 6h378q5 0 6-6" fill="none" stroke="#e6ebf5"/>
<!-- s5 -->
<use href="#cb" x="1197.300" y="757.300" width="17" height="17"/>
<g transform="translate(1244,766)" clip-path="url(#av)"><rect x="-22" y="-22" width="44" height="44" fill="#cdd5da"/><path d="M-9-18c4-5 14-4 16 2v14H-9z" fill="#a88b6e"/><ellipse cy="-9" rx="6" ry="8" fill="#caa186"/></g>
<text class="nm" x="1275" y="763.500" textLength="112.300" lengthAdjust="spacingAndGlyphs">Denise B Vega</text>
<use href="#inf" x="1392.300" y="752" width="14" height="14"/><use href="#dots" x="1541.700" y="757" width="15" height="4"/>

<!-- overlays -->
<text x="1320" y="704" class="l" font-size="21" fill="#8a8a8a" fill-opacity=".65" textLength="166" lengthAdjust="spacingAndGlyphs">Activate Windows</text>
<text x="1320" y="726.500" class="l" font-size="14.500" fill="#8a8a8a" fill-opacity=".6" textLength="240" lengthAdjust="spacingAndGlyphs">Go to Settings to activate Windows.</text>
<circle cx="1483.700" cy="733.700" r="9.500" fill="none" stroke="#5f5f5f" stroke-width="2"/>
<text x="1483.700" y="738.700" text-anchor="middle" class="l" font-weight="700" font-size="13.500" fill="#5f5f5f">?</text>
<text x="1504" y="739.500" class="p" font-weight="700" font-size="14.500" fill="#666" textLength="64" lengthAdjust="spacingAndGlyphs">Support</text>
</svg>
</body></html>
